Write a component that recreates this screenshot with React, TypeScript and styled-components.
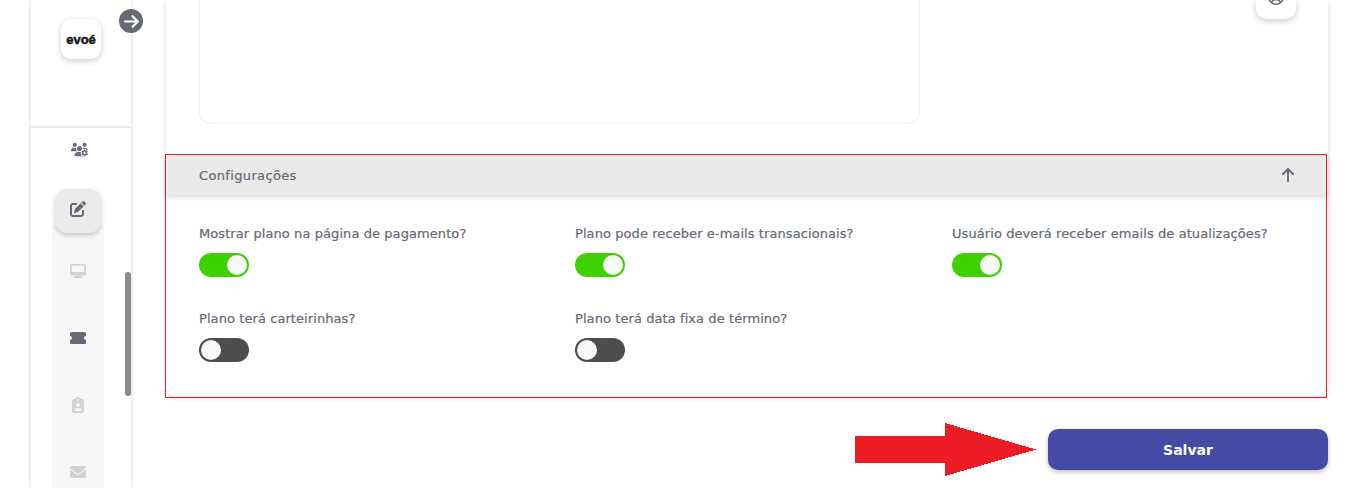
import React from "react";
import styled, { createGlobalStyle } from "styled-components";
import {
  FaUsersGear,
  FaPenToSquare,
  FaDesktop,
  FaClipboardUser,
  FaEnvelope,
  FaArrowRight,
  FaArrowUp,
  FaRegCircleUser,
} from "react-icons/fa6";

const GlobalStyle = createGlobalStyle`
  html, body {
    margin: 0;
    padding: 0;
    background: #fff;
    overflow: hidden;
  }
  * {
    box-sizing: border-box;
  }
`;

//Config options
const options = [
  { label: "Mostrar plano na página de pagamento?", on: true },
  { label: "Plano pode receber e-mails transacionais?", on: true },
  { label: "Usuário deverá receber emails de atualizações?", on: true },
  { label: "Plano terá carteirinhas?", on: false },
  { label: "Plano terá data fixa de término?", on: false },
];

const TicketIcon = () => (
  <svg width="16" height="12" viewBox="0 0 16 12" fill="currentColor">
    <path d="M1.5 0h13A1.5 1.5 0 0 1 16 1.5V4a2 2 0 0 0 0 4v2.5a1.5 1.5 0 0 1-1.500 1.500h-13A1.500 1.500 0 0 1 0 10.500V8a2 2 0 0 0 0-4V1.500A1.500 1.500 0 0 1 1.500 0z" />
  </svg>
);

const App = () => {
  return (
    <Page>
      <GlobalStyle />
      <Sidebar>
        <LogoArea>
          <Logo>evoé</Logo>
        </LogoArea>
        <TopItem>
          <FaUsersGear size={17} />
        </TopItem>
        <ActiveItem>
          <FaPenToSquare size={16} />
        </ActiveItem>
        <Strip>
          <MenuItem>
            <FaDesktop size={16} />
          </MenuItem>
          <MenuItem $dark>
            <TicketIcon />
          </MenuItem>
          <MenuItem>
            <FaClipboardUser size={16} />
          </MenuItem>
          <MenuItem>
            <FaEnvelope size={16} />
          </MenuItem>
        </Strip>
        <ScrollThumb />
      </Sidebar>
      <ToggleSidebar>
        <FaArrowRight size={17} />
      </ToggleSidebar>

      <Main>
        <Card>
          <TopRow>
            <TextBox />
            <RoundButton>
              <FaRegCircleUser size={16} />
            </RoundButton>
          </TopRow>
          <Section>
            <SectionHeader>
              <span>Configurações</span>
              <FaArrowUp size={16} />
            </SectionHeader>
            <OptionsGrid>
              {options.map((option) => (
                <Option key={option.label}>
                  <OptionLabel>{option.label}</OptionLabel>
                  <Toggle $on={option.on} />
                </Option>
              ))}
            </OptionsGrid>
            <Highlight />
          </Section>
        </Card>
        <Actions>
          <RedArrow width="181" height="54" viewBox="0 0 181 54" shapeRendering="crispEdges">
            <polygon points="0,13 90,13 90,0 181,26.500 90,53 90,40 0,40" fill="#ed1c24" />
          </RedArrow>
          <SaveButton>Salvar</SaveButton>
        </Actions>
      </Main>
    </Page>
  );
};

const Page = styled.div`
  position: relative;
  display: flex;
  width: 1360px;
  height: 488px;
  padding-left: 31px;
  overflow: hidden;
  background: #fff;
  font-family: "DejaVu Sans", sans-serif;
`;

const Sidebar = styled.aside`
  position: relative;
  flex: 0 0 100px;
  height: 488px;
  display: flex;
  flex-direction: column;
  align-items: center;
  background: #fff;
  box-shadow: 0 0 4px rgba(0, 0, 0, 0.18);
`;

const LogoArea = styled.div`
  width: 100%;
  height: 128px;
  flex: none;
  padding-top: 19px;
  display: flex;
  justify-content: center;
  border-bottom: 2px solid #e9e9e9;
`;

const Logo = styled.div`
  width: 40px;
  height: 40px;
  display: flex;
  align-items: center;
  justify-content: center;
  border-radius: 10px;
  background: #fff;
  box-shadow: 0 2px 6px rgba(0, 0, 0, 0.2);
  color: #151515;
  font-family: "Liberation Sans", sans-serif;
  font-size: 13px;
  font-weight: 700;
  -webkit-text-stroke: 0.5px #151515;
`;

const TopItem = styled.div`
  height: 42px;
  margin-left: -4px;
  flex: none;
  display: flex;
  align-items: center;
  color: #6b6e7a;
`;

const ActiveItem = styled.div`
  position: relative;
  z-index: 1;
  flex: none;
  width: 46px;
  height: 44px;
  margin: 19px 0 0 -6px;
  padding-bottom: 4px;
  display: flex;
  align-items: center;
  justify-content: center;
  border-radius: 12px;
  background: #ebebeb;
  box-shadow: 0 2px 5px rgba(0, 0, 0, 0.2);
  color: #666975;
`;

const Strip = styled.div`
  flex: 1;
  width: 52px;
  margin: -8px 0 0 -6px;
  padding-top: 12px;
  display: flex;
  flex-direction: column;
  background: #f7f7f7;
`;

const MenuItem = styled.div<{ $dark?: boolean }>`
  flex: none;
  height: 67px;
  display: flex;
  align-items: center;
  justify-content: center;
  color: ${(p) => (p.$dark ? "#666975" : "#d2d2d2")};
`;

const ScrollThumb = styled.div`
  position: absolute;
  top: 272px;
  right: 0;
  width: 6px;
  height: 124px;
  border-radius: 3px;
  background: #8a8a8a;
`;

const ToggleSidebar = styled.div`
  position: absolute;
  top: 9px;
  left: 119px;
  width: 24px;
  height: 24px;
  display: flex;
  align-items: center;
  justify-content: center;
  border-radius: 50%;
  background: #666975;
  color: #fff;
`;

const Main = styled.main`
  flex: 0 0 1162px;
  margin-left: 35px;
`;

const Card = styled.div`
  height: 397px;
  display: flex;
  flex-direction: column;
  border-radius: 0 0 10px 10px;
  background: #fff;
  box-shadow: 0 1px 5px rgba(0, 0, 0, 0.16);
`;

const TopRow = styled.div`
  flex: none;
  height: 155px;
  display: flex;
  align-items: flex-start;
  justify-content: space-between;
  padding: 0 32px 0 33px;
`;

const TextBox = styled.div`
  width: 721px;
  height: 124px;
  border: 1px solid #f0f0f0;
  border-top: none;
  border-radius: 0 0 12px 12px;
`;

const RoundButton = styled.div`
  width: 40px;
  height: 19px;
  display: flex;
  align-items: flex-end;
  justify-content: center;
  overflow: hidden;
  border-radius: 0 0 10px 10px;
  background: #fff;
  box-shadow: 0 2px 6px rgba(0, 0, 0, 0.22);
  color: #666975;
  padding-bottom: 14px;
  svg {
    flex: none;
  }
`;

const Section = styled.section`
  position: relative;
  flex: 1;
`;

const SectionHeader = styled.div`
  height: 40px;
  display: flex;
  align-items: center;
  justify-content: space-between;
  padding: 0 32px 0 33px;
  background: #e9e9e9;
  box-shadow: 0 2px 5px rgba(0, 0, 0, 0.16);
  color: #666975;
  font-size: 13px;
  letter-spacing: 0.35px;
  -webkit-text-stroke: 0.2px #666975;
  svg {
    color: #6b6e7a;
  }
`;

const OptionsGrid = styled.div`
  display: grid;
  grid-template-columns: 376px 377px 1fr;
  row-gap: 34px;
  padding: 31px 0 0 33px;
`;

const Option = styled.div`
  display: flex;
  flex-direction: column;
  align-items: flex-start;
  gap: 11px;
`;

const OptionLabel = styled.div`
  height: 16px;
  line-height: 16px;
  color: #666975;
  font-size: 13px;
  letter-spacing: 0.08px;
  -webkit-text-stroke: 0.2px #666975;
  white-space: nowrap;
`;

const Toggle = styled.div<{ $on: boolean }>`
  display: flex;
  justify-content: ${(p) => (p.$on ? "flex-end" : "flex-start")};
  width: 50px;
  height: 24px;
  padding: 2px;
  border-radius: 12px;
  background: ${(p) => (p.$on ? "#3fd100" : "#4d4d4d")};
  &::after {
    content: "";
    width: 20px;
    height: 20px;
    border-radius: 50%;
    background: #f8f8f8;
  }
`;

const Highlight = styled.div`
  position: absolute;
  inset: -1px 1px -1px -1px;
  border: 1px solid #ed1c24;
  pointer-events: none;
`;

const Actions = styled.div`
  display: flex;
  justify-content: flex-end;
  align-items: flex-start;
  gap: 12px;
  margin-top: 26px;
`;

const RedArrow = styled.svg`
  flex: none;
`;

const SaveButton = styled.button`
  width: 280px;
  height: 41px;
  margin-top: 6px;
  border: none;
  border-radius: 10px;
  background: #454aa4;
  box-shadow: 0 2px 5px rgba(0, 0, 0, 0.25);
  color: #fff;
  font-family: "DejaVu Sans", sans-serif;
  font-size: 14px;
  font-weight: 700;
`;

export default App;
